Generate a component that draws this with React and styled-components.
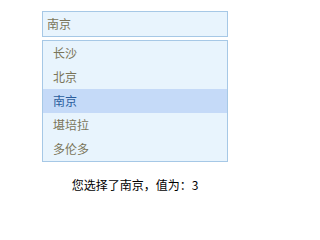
import React, { useState } from "react";
import styled, { createGlobalStyle } from "styled-components";

const GlobalStyle = createGlobalStyle`
  body {
    margin: 0;
    background: #fff;
    font-family: "Noto Sans CJK SC", "Liberation Sans", sans-serif;
  }
`;

const Wrapper = styled.div`
  width: 186px;
  display: flex;
  flex-direction: column;
  padding: 11px 0 0 42px;
`;

const Combo = styled.div`
  display: flex;
  flex-direction: column;
  gap: 3px;
`;

const Input = styled.div`
  box-sizing: border-box;
  height: 26px;
  border: 1px solid #a6c8e6;
  background: #e8f4fd;
  color: #7a7459;
  font-size: 12px;
  line-height: 24px;
  padding-left: 4px;
`;

const List = styled.ul`
  list-style: none;
  margin: 0;
  padding: 0;
  border: 1px solid #a6c8e6;
  background: #e8f4fd;
`;

const Item = styled.li`
  height: 24px;
  line-height: 24px;
  font-size: 12px;
  padding-left: 10px;
  color: ${(p) => (p.$active ? "#2b5e9d" : "#7a7459")};
  background: ${(p) => (p.$active ? "#c5daf8" : "transparent")};
  cursor: pointer;
`;

const Result = styled.p`
  margin: 15px 0 0;
  font-size: 12px;
  line-height: 16px;
  color: #000;
  text-align: center;
  white-space: nowrap;
`;

const cities = ["长沙", "北京", "南京", "堪培拉", "多伦多"];

const App = () => {
  const [selected, setSelected] = useState(2);

  return (
    <>
      <GlobalStyle />
      <Wrapper>
        <Combo>
          <Input>{cities[selected]}</Input>
          <List>
            {cities.map((city, i) => (
              <Item key={city} $active={i === selected} onClick={() => setSelected(i)}>
                {city}
              </Item>
            ))}
          </List>
        </Combo>
        <Result>
          您选择了{cities[selected]}，值为：{selected + 1}
        </Result>
      </Wrapper>
    </>
  );
};

export default App;
